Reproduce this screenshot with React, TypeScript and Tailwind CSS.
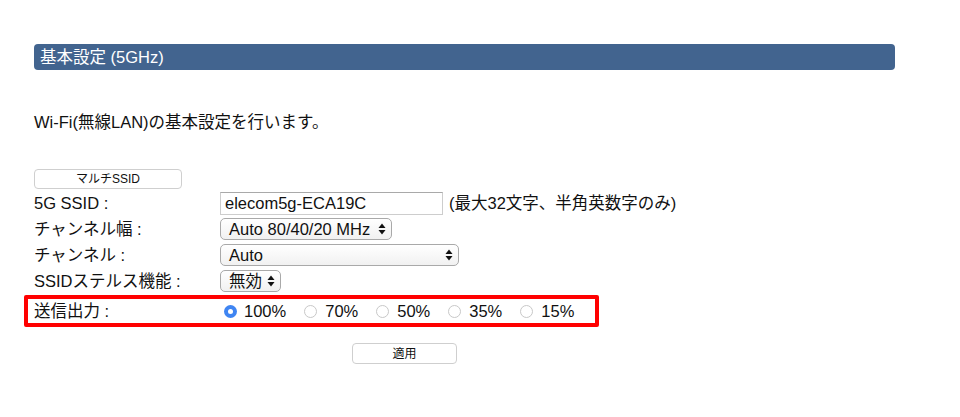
import React from 'react';

const font = { fontFamily: '"Liberation Sans", "Noto Sans CJK JP", sans-serif' };

const Arrows: React.FC = () => (
  <svg width="8" height="12" viewBox="0 0 8 12" className="shrink-0">
    <path d="M4 0.5 L7.5 5 L0.5 5 Z" fill="#111" />
    <path d="M4 11.5 L7.5 7 L0.5 7 Z" fill="#111" />
  </svg>
);

const SelectBox: React.FC<{ value: string; width: string }> = ({ value, width }) => (
  <div
    className={`${width} h-[22px] flex items-center justify-between pl-[8px] pr-[5px] border border-[#a9a9a9] rounded-[5px] bg-gradient-to-b from-white to-[#f1f1f1] leading-none`}
  >
    <span>{value}</span>
    <Arrows />
  </div>
);

const Radio: React.FC<{ label: string; checked?: boolean }> = ({ label, checked }) => (
  <label className="flex items-center">
    {checked ? (
      <span className="w-[13px] h-[13px] rounded-full bg-[#3f85f2] flex items-center justify-center mr-[7px]">
        <span className="w-[5px] h-[5px] rounded-full bg-white" />
      </span>
    ) : (
      <span className="w-[13px] h-[13px] rounded-full border border-[#c8c8c8] bg-white mr-[8px]" />
    )}
    <span>{label}</span>
  </label>
);

const Row: React.FC<{ label: string; children: React.ReactNode }> = ({ label, children }) => (
  <div className="flex items-center h-[26px]">
    <div className="w-[186px] shrink-0">{label}</div>
    <div className="flex items-center">{children}</div>
  </div>
);

const App: React.FC = () => {
  const powers = ['100%', '70%', '50%', '35%', '15%'];

  return (
    <div className="w-[960px] h-[417px] bg-white text-[#111] text-[16.5px]" style={font}>
      <div className="pt-[44px] pl-[34px] w-[895px]">
        <div className="h-[26px] rounded-[4px] bg-[#42648f] text-white px-[6px] leading-[26px]">
          基本設定 (5GHz)
        </div>

        <p className="mt-[40px] leading-[24px]">Wi-Fi(無線LAN)の基本設定を行います。</p>

        <button className="mt-[35px] w-[148px] h-[20px] border border-[#cfcfcf] rounded-[4px] bg-white text-[12px] leading-none block">
          マルチSSID
        </button>

        <div className="mt-[1px]">
          <Row label="5G SSID :">
            <div className="w-[223px] h-[23px] border border-[#cdcdcd] border-t-[#a9a9a9] bg-white flex items-center pl-[4px]">
              elecom5g-ECA19C
            </div>
            <span className="ml-[6px]">(最大32文字、半角英数字のみ)</span>
          </Row>
          <Row label="チャンネル幅 :">
            <SelectBox value="Auto 80/40/20 MHz" width="w-[172px]" />
          </Row>
          <Row label="チャンネル :">
            <SelectBox value="Auto" width="w-[239px]" />
          </Row>
          <Row label="SSIDステルス機能 :">
            <SelectBox value="無効" width="w-[61px]" />
          </Row>

          <div className="-ml-[10px] mt-[1px] w-[575px] h-[32px] border-4 border-[#ff0000] rounded-[2px] flex items-center pl-[6px]">
            <div className="w-[186px] shrink-0">送信出力 :</div>
            <div className="flex items-center gap-[18px] pl-[4px]">
              {powers.map((p, i) => (
                <Radio key={p} label={p} checked={i === 0} />
              ))}
            </div>
          </div>
        </div>

        <button className="mt-[16px] ml-[318px] w-[105px] h-[21px] border border-[#cfcfcf] rounded-[4px] bg-white text-[12px] leading-none block">
          適用
        </button>
      </div>
    </div>
  );
};

export default App;
